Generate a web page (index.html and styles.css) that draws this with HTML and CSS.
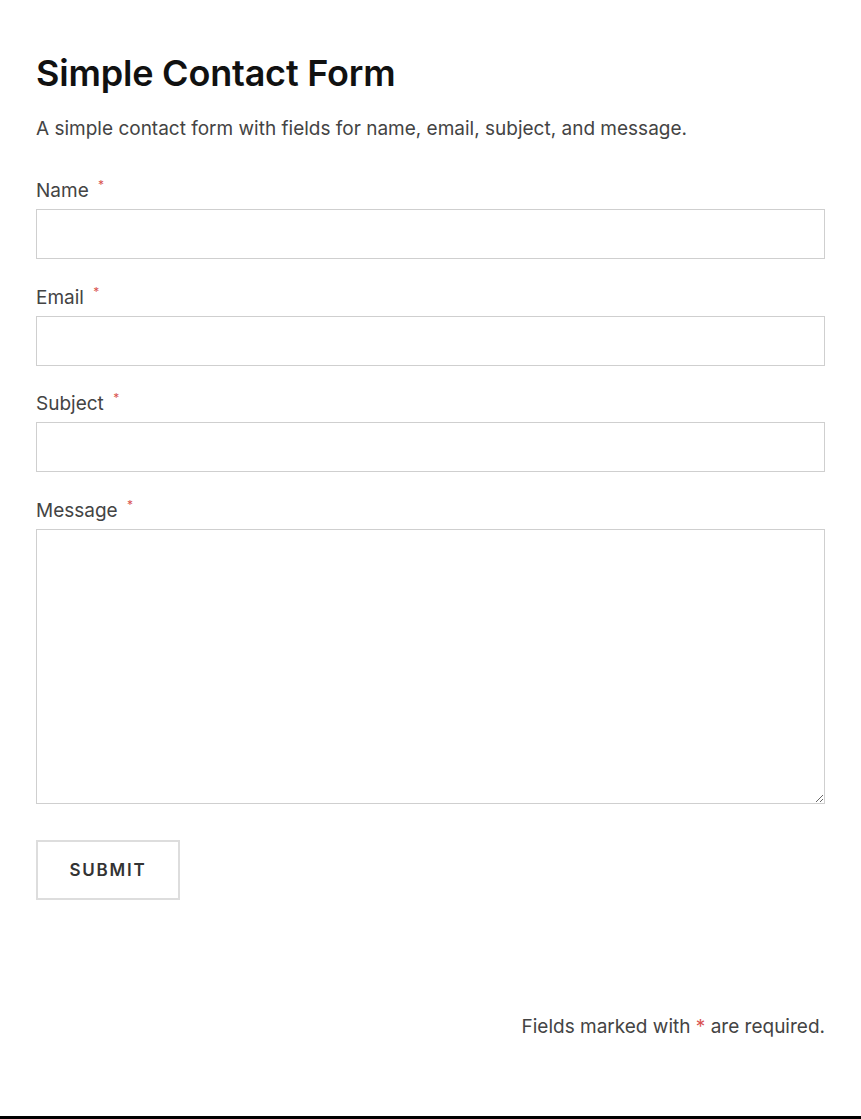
FILE: index.html
```html
<!DOCTYPE html>
<html lang="en">
<head>
<meta charset="utf-8">
<title>Simple Contact Form</title>
<link rel="stylesheet" href="styles.css">
</head>
<body>
<div class="page">
  <main class="content">
    <h1 class="title">Simple Contact Form</h1>
    <p class="desc">A simple contact form with fields for name, email, subject, and message.</p>
    <form class="form">
      <div class="field">
        <label class="label" for="name">Name <span class="req">*</span></label>
        <input class="input" id="name" type="text">
      </div>
      <div class="field">
        <label class="label" for="email">Email <span class="req">*</span></label>
        <input class="input" id="email" type="email">
      </div>
      <div class="field">
        <label class="label" for="subject">Subject <span class="req">*</span></label>
        <input class="input" id="subject" type="text">
      </div>
      <div class="field">
        <label class="label" for="message">Message <span class="req">*</span></label>
        <textarea class="textarea" id="message"></textarea>
      </div>
      <div class="actions">
        <button class="submit" type="button">SUBMIT</button>
      </div>
    </form>
    <p class="note">Fields marked with <span class="req-big">*</span> are required.</p>
  </main>
</div>
</body>
</html>
```
FILE: styles.css
```css
html, body {
  margin: 0;
  padding: 0;
  background: #fff;
}
body {
  font-family: Inter, "Noto Sans", sans-serif;
  color: #333;
}
.page {
  min-height: 100vh;
  box-sizing: border-box;
  border-bottom: 3px solid #000;
}
.content {
  padding: 52px 36px 0 36px;
  display: flex;
  flex-direction: column;
}
.title {
  margin: 0;
  font-size: 36px;
  line-height: 42px;
  font-weight: 600;
  color: #111;
  letter-spacing: -0.2px;
}
.desc {
  margin: 22px 0 0 0;
  font-size: 19px;
  line-height: 26px;
  color: #444;
}
.form {
  margin-top: 38px;
  display: flex;
  flex-direction: column;
  gap: 27.7px;
}
.field {
  display: flex;
  flex-direction: column;
  gap: 7px;
}
.label {
  display: block;
  font-size: 19px;
  line-height: 22px;
  color: #444;
}
.req {
  color: #d9534f;
  font-size: 12px;
  line-height: 0;
  vertical-align: 8px;
  margin-left: 4px;
}
.input {
  display: block;
  box-sizing: border-box;
  width: 100%;
  height: 50px;
  margin: 0;
  border: 1px solid #cfcfcf;
  border-radius: 0;
  background: #fff;
  font: inherit;
}
.textarea {
  display: block;
  box-sizing: border-box;
  width: 100%;
  height: 275px;
  margin: 0;
  border: 1px solid #cfcfcf;
  border-radius: 0;
  background: #fff;
  font: inherit;
}
.actions {
  display: flex;
  margin-top: 8.5px;
}
.submit {
  width: 144px;
  height: 60px;
  box-sizing: border-box;
  border: 2px solid #ddd;
  background: #fff;
  font-family: Inter, "Noto Sans", sans-serif;
  font-size: 17px;
  font-weight: 600;
  letter-spacing: 1.8px;
  color: #333;
  padding: 0;
  cursor: pointer;
}
.note {
  margin: 114px 0 0 0;
  text-align: right;
  font-size: 19px;
  line-height: 26px;
  color: #444;
}
.req-big {
  color: #d9534f;
}
```
